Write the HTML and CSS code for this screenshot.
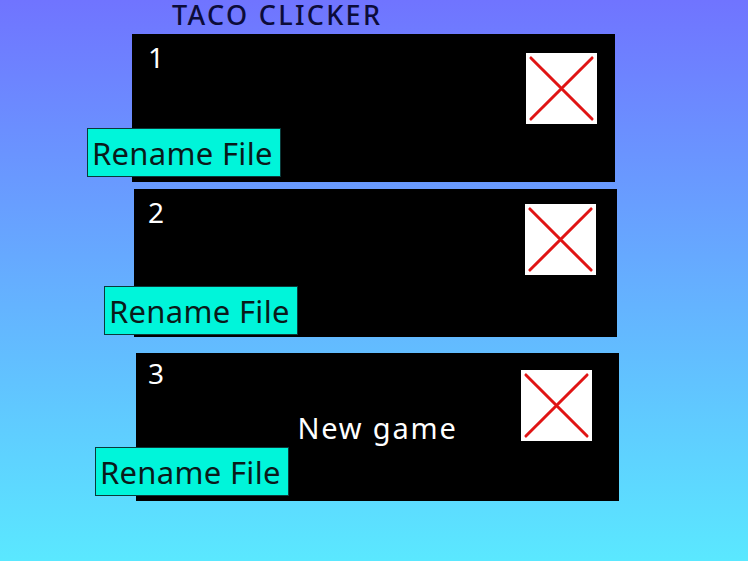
FILE: index.html
```html
<!DOCTYPE html>
<html lang="en">
<head>
    <meta charset="UTF-8">
    <meta name="viewport" content="width=device-width, initial-scale=1.0">
    <title>Taco Clicker - Save Files</title>
    <link rel="stylesheet" href="styles.css">
</head>
<body>
    <h1 class="title">TACO CLICKER</h1>
    <div class="slots">
        <div class="slot slot-1">
            <span class="slot-number">1</span>
            <span class="slot-label"></span>
            <button class="btn-delete" aria-label="Delete file 1">
                <svg viewBox="0 0 72 72"><path d="M5 5 L67 67 M67 5 L5 67"/></svg>
            </button>
            <button class="btn-rename">Rename File</button>
        </div>
        <div class="slot slot-2">
            <span class="slot-number">2</span>
            <span class="slot-label"></span>
            <button class="btn-delete" aria-label="Delete file 2">
                <svg viewBox="0 0 72 72"><path d="M5 5 L67 67 M67 5 L5 67"/></svg>
            </button>
            <button class="btn-rename">Rename File</button>
        </div>
        <div class="slot slot-3">
            <span class="slot-number">3</span>
            <span class="slot-label">New game</span>
            <button class="btn-delete" aria-label="Delete file 3">
                <svg viewBox="0 0 72 72"><path d="M5 5 L67 67 M67 5 L5 67"/></svg>
            </button>
            <button class="btn-rename">Rename File</button>
        </div>
    </div>
</body>
</html>
```

FILE: styles.css
```css
body {
    font-family: "Noto Sans", "Open Sans", sans-serif;
    background: linear-gradient(#7074ff, #5ae8ff);
    margin: 0;
    padding: 0;
    height: 561px;
    overflow: hidden;
}
.title {
    margin: 0;
    padding: 2px 0 0 172px;
    height: 32px;
    font-size: 27px;
    font-weight: 500;
    letter-spacing: 2.3px;
    line-height: 26px;
    color: #0c0c3a;
}
.slots {
    display: flex;
    flex-direction: column;
}
.slot {
    position: relative;
    width: 483px;
    height: 148px;
    background: #000;
    display: flex;
    justify-content: space-between;
    align-items: flex-start;
    box-sizing: border-box;
    padding: 4px 18px 0 16px;
}
.slot-1 {
    margin-left: 132px;
}
.slot-2 {
    margin-left: 134px;
    margin-top: 7px;
    padding-left: 14px;
}
.slot-3 {
    margin-left: 136px;
    margin-top: 16px;
    padding-left: 12px;
    padding-top: 1px;
}
.slot-number {
    color: #fff;
    font-size: 28px;
    line-height: 38px;
}
.slot-label {
    position: absolute;
    inset: 0;
    display: flex;
    align-items: center;
    justify-content: center;
    color: #fff;
    font-size: 29px;
    letter-spacing: 1.8px;
    pointer-events: none;
}
.btn-delete {
    width: 71px;
    height: 71px;
    padding: 0;
    border: none;
    background: #fff;
    margin-top: 15px;
    cursor: pointer;
}
.slot-2 .btn-delete {
    margin-top: 11px;
    margin-right: 3px;
}
.slot-3 .btn-delete {
    margin-top: 16px;
    margin-right: 9px;
}
.btn-delete svg {
    display: block;
    width: 100%;
    height: 100%;
}
.btn-delete path {
    stroke: #e01414;
    stroke-width: 3;
    stroke-linecap: round;
    fill: none;
}
.btn-rename {
    position: absolute;
    top: 94px;
    left: -45px;
    width: 194px;
    height: 49px;
    padding: 0 0 0 4px;
    background: #00f5da;
    border: 1px solid #0a3a3a;
    font-family: inherit;
    font-size: 31px;
    letter-spacing: 0.3px;
    color: #0a1a1a;
    text-align: left;
    cursor: pointer;
}
.slot-2 .btn-rename {
    top: 97px;
    left: -30px;
}
.slot-3 .btn-rename {
    left: -41px;
}
```
